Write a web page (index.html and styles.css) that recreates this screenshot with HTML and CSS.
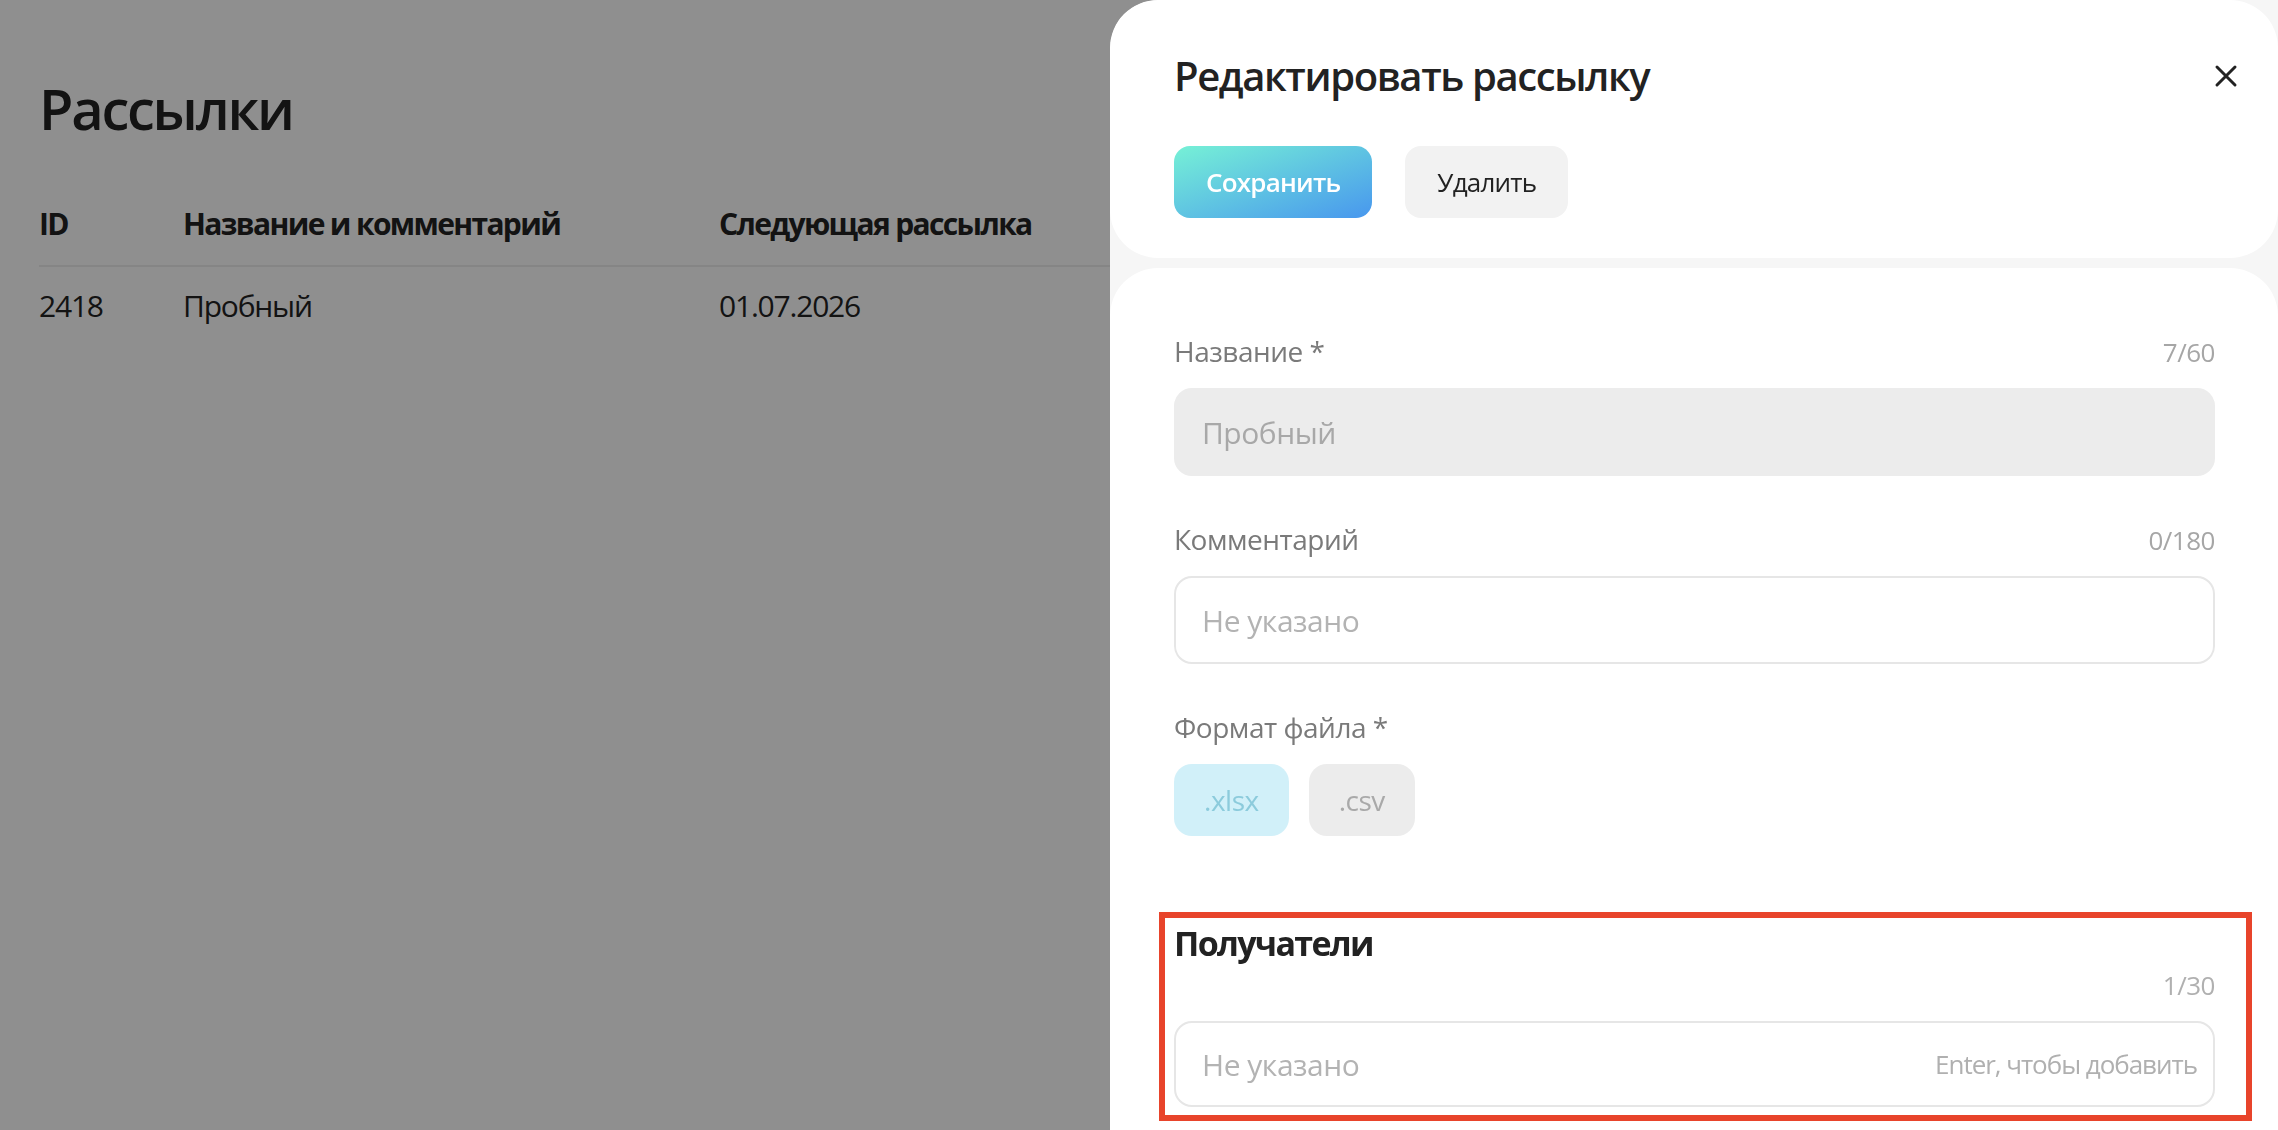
FILE: index.html
```html
<!DOCTYPE html>
<html lang="ru">
<head>
	<title>Рассылки</title>
	<meta charset="utf-8">
	<link rel="stylesheet" href="styles.css">
</head>
<body>
	<main class="page">
		<h1 class="page-title">Рассылки</h1>
		<table class="mailings">
			<thead>
				<tr>
					<th class="col-id">ID</th>
					<th class="col-name">Название и комментарий</th>
					<th>Следующая рассылка</th>
				</tr>
			</thead>
			<tbody>
				<tr>
					<td>2418</td>
					<td>Пробный</td>
					<td>01.07.2026</td>
				</tr>
			</tbody>
		</table>
	</main>

	<div class="overlay"></div>

	<aside class="drawer">
		<section class="card card-head">
			<div class="head-row">
				<h2 class="drawer-title">Редактировать рассылку</h2>
				<button class="close-btn" type="button" aria-label="Закрыть">
					<svg width="24" height="24" viewBox="0 0 24 24"><path d="M3 3L21 21M21 3L3 21" stroke="#222" stroke-width="3" stroke-linecap="round"/></svg>
				</button>
			</div>
			<div class="actions">
				<button class="btn btn-save" type="button">Сохранить</button>
				<button class="btn btn-delete" type="button">Удалить</button>
			</div>
		</section>

		<section class="card card-form">
			<div class="field">
				<div class="field-label">
					<span>Название *</span>
					<span class="counter">7/60</span>
				</div>
				<div class="input input-disabled">Пробный</div>
			</div>

			<div class="field">
				<div class="field-label">
					<span>Комментарий</span>
					<span class="counter">0/180</span>
				</div>
				<div class="input placeholder">Не указано</div>
			</div>

			<div class="field">
				<div class="field-label">
					<span>Формат файла *</span>
				</div>
				<div class="formats">
					<span class="chip chip-active">.xlsx</span>
					<span class="chip">.csv</span>
				</div>
			</div>

			<div class="recipients">
				<h3 class="section-title">Получатели</h3>
				<div class="counter counter-line">1/30</div>
				<div class="input placeholder input-tags">
					<span>Не указано</span>
					<span class="hint">Enter, чтобы добавить</span>
				</div>
			</div>
		</section>
	</aside>
</body>
</html>
```

FILE: styles.css
```css
body {
	margin: 0;
	background-color: #fff;
	color: #222;
	font-family: "Open Sans", "Noto Sans", sans-serif;
	letter-spacing: -0.03em;
}
.page {
	padding: 0 39px;
}
.page-title {
	margin: 76px 0 0;
	font-size: 56px;
	line-height: 64px;
	font-weight: 600;
	letter-spacing: -0.04em;
}
.mailings {
	margin-top: 48px;
	width: 100%;
	border-collapse: collapse;
	font-size: 30px;
	line-height: 40px;
	text-align: left;
}
.mailings th {
	padding: 16px 0 21px;
	font-weight: 700;
	letter-spacing: -0.055em;
	border-bottom: 2px solid #ededed;
}
.mailings td {
	padding: 19px 0;
	letter-spacing: -0.04em;
}
.mailings .col-id {
	width: 144px;
}
.mailings .col-name {
	width: 536px;
}

.overlay {
	position: fixed;
	top: 0;
	left: 0;
	right: 0;
	bottom: 0;
	background-color: rgba(0, 0, 0, 0.44);
}

.drawer {
	position: fixed;
	top: 0;
	right: 0;
	bottom: 0;
	width: 1168px;
	display: flex;
	flex-direction: column;
	gap: 10px;
	background-color: #f6f6f6;
	border-top-left-radius: 48px;
	overflow: hidden;
}
.card {
	background-color: #fff;
	border-radius: 48px;
}
.card-head {
	padding: 52px 40px 40px 64px;
}
.head-row {
	display: flex;
	justify-content: space-between;
	align-items: center;
}
.drawer-title {
	margin: 0;
	font-size: 40px;
	line-height: 48px;
	font-weight: 600;
	letter-spacing: -0.035em;
}
.close-btn {
	border: none;
	background: none;
	padding: 0;
	width: 24px;
	height: 24px;
	cursor: pointer;
}
.actions {
	display: flex;
	gap: 33px;
	margin-top: 46px;
}
.btn {
	height: 72px;
	padding: 0 32px;
	border: none;
	border-radius: 16px;
	font-family: inherit;
	font-size: 26px;
	letter-spacing: -0.03em;
	cursor: pointer;
}
.btn-save {
	background: linear-gradient(to bottom right, #76f1d6, #4897ee);
	color: #fff;
	font-weight: 600;
}
.btn-delete {
	background-color: #f2f2f2;
	color: #222;
}

.card-form {
	flex: 1;
	padding: 65px 63px 0 64px;
	border-bottom-left-radius: 0;
	border-bottom-right-radius: 0;
}
.field {
	margin-bottom: 45px;
}
.field-label {
	display: flex;
	justify-content: space-between;
	align-items: baseline;
	margin-bottom: 19px;
	font-size: 28px;
	line-height: 36px;
	color: #7a7a7a;
}
.counter {
	font-size: 26px;
	line-height: 34px;
	color: #a6a6a6;
}
.input {
	box-sizing: border-box;
	height: 88px;
	display: flex;
	align-items: center;
	padding: 0 16px 0 26px;
	border: 2px solid #e6e6e6;
	border-radius: 18px;
	font-size: 30px;
}
.input-disabled {
	background-color: #ececec;
	border-color: #ececec;
	color: #a8a8a8;
}
.placeholder {
	color: #b3b3b3;
}
.formats {
	display: flex;
	gap: 20px;
}
.chip {
	height: 72px;
	padding: 0 30px;
	display: flex;
	align-items: center;
	border-radius: 18px;
	background-color: #ececec;
	color: #a9a9a9;
	font-size: 28px;
}
.chip-active {
	background-color: #d1f0f9;
	color: #8ccbdc;
}

.recipients {
	margin: 76px -37px 0 -15px;
	padding: 3px 31px 8px 9px;
	border: 6px solid #e8442b;
}
.section-title {
	margin: 0;
	font-size: 34px;
	line-height: 44px;
	font-weight: 700;
	letter-spacing: -0.05em;
}
.counter-line {
	margin-top: 3px;
	margin-bottom: 19px;
	text-align: right;
	color: #b0b0b0;
}
.input-tags {
	height: 86px;
	justify-content: space-between;
}
.hint {
	font-size: 26px;
	letter-spacing: -0.04em;
	color: #b0b0b0;
}
```
